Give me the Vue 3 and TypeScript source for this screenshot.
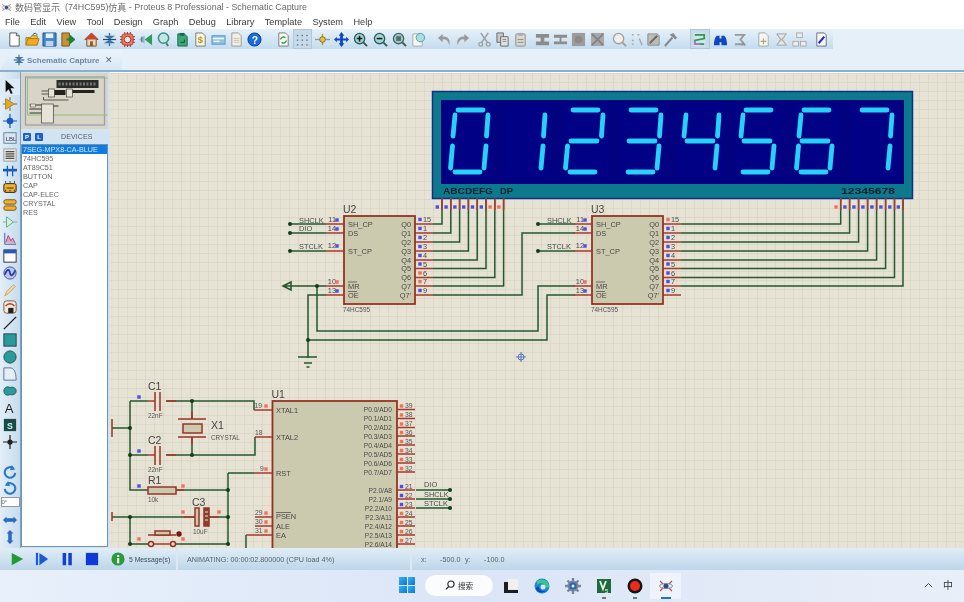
<template>
  <div class="app">
    <!-- title bar -->
    <div class="titlebar">
      <svg class="title-icon" viewBox="0 0 16 16" v-html="icons.atom"></svg>
      <span class="title-cjk">数码管显示</span>
      <span>&nbsp;&nbsp;(74HC595)</span>
      <span class="title-cjk">仿真</span>
      <span>&nbsp;- Proteus 8 Professional - Schematic Capture</span>
    </div>

    <!-- menu -->
    <div class="menubar">
      <span v-for="m in menus" :key="m">{{ m }}</span>
    </div>

    <!-- main toolbar -->
    <div class="toolbar-row">
      <div class="toolbar">
        <div
          v-for="(g, gi) in toolGroups"
          :key="gi"
          class="tool-group"
          :style="{ marginLeft: g.gap + 'px' }"
        >
          <div
            v-for="(name, i) in g.icons"
            :key="i"
            class="tb-btn"
            :class="{ 'tb-on': name === 'grid' || name === 'route' }"
            :style="{ width: g.w + 'px' }"
          >
            <svg viewBox="0 0 16 16" v-html="icons[name]"></svg>
          </div>
        </div>
      </div>
    </div>

    <!-- tabs -->
    <div class="tabbar">
      <div class="tab">
        <svg viewBox="0 0 16 16" v-html="icons.schem"></svg>
        <span class="tab-label">Schematic Capture</span>
        <span class="tab-close">✕</span>
      </div>
    </div>

    <div class="main">
      <!-- mode strip -->
      <div class="modes">
        <div
          v-for="(name, i) in modeTop"
          :key="i"
          class="mode"
          :class="{ 'mode-on': i === 0 }"
        >
          <svg viewBox="0 0 16 16" v-html="icons[name]"></svg>
        </div>
        <div class="mode-gap"></div>
        <div v-for="name in ['rotcw', 'rotccw']" :key="name" class="mode">
          <svg viewBox="0 0 16 16" v-html="icons[name]"></svg>
        </div>
        <div class="angle">0°</div>
        <div v-for="name in ['fliph', 'flipv']" :key="name" class="mode">
          <svg viewBox="0 0 16 16" v-html="icons[name]"></svg>
        </div>
      </div>

      <!-- overview + device list -->
      <div class="side">
        <div class="overview">
          <svg viewBox="0 0 86 56" class="overview-svg">
            <rect x="4" y="4" width="79" height="48" fill="none" stroke="#9a9ab4" stroke-width="1.2" />
            <path d="M6 5 H86 M6 5 V42 H86" fill="none" stroke="#8fbf86" stroke-width="1" />
            <rect x="35" y="7" width="42" height="8" fill="#2b2b2b" />
            <path d="M37 11 H75" stroke="#777" stroke-width="3" stroke-dasharray="2 1.5" />
            <rect x="27" y="16" width="6" height="8" fill="#e6e4d6" stroke="#444" stroke-width=".7" />
            <rect x="45" y="16" width="6" height="8" fill="#e6e4d6" stroke="#444" stroke-width=".7" />
            <path d="M33 17h11v5H33z M51 17h22v3H51z" fill="#222" />
            <path d="M20 18h7M20 21h7M22 24v3h25" stroke="#333" stroke-width=".8" fill="none" />
            <rect x="20" y="31" width="12" height="19" fill="#e6e4d6" stroke="#444" stroke-width=".7" />
            <path d="M8 32h12M8 36h12M8 40h12M32 33h5" stroke="#333" stroke-width="1" />
            <rect x="9" y="31" width="5" height="3" fill="#e6e4d6" stroke="#444" stroke-width=".5" />
          </svg>
        </div>
        <div class="dev-head">
          <span class="pl">P</span>
          <span class="pl">L</span>
          <span class="dev-title">DEVICES</span>
        </div>
        <div class="dev-list">
          <div
            v-for="(d, i) in devices"
            :key="d"
            class="dev"
            :class="{ 'dev-on': i === 0 }"
          >{{ d }}</div>
        </div>
      </div>

      <!-- schematic canvas -->
      <svg class="canvas" viewBox="110 73 854 475">
        <defs>
          <pattern id="minor" x="1" y="1" width="9" height="9" patternUnits="userSpaceOnUse">
            <path d="M9 0H0V9" fill="none" stroke="#d2cfbf" stroke-width="1" />
          </pattern>
        </defs>
        <rect x="110" y="73" width="854" height="475" fill="#e6e3d5" />
        <rect x="110" y="73" width="854" height="475" fill="url(#minor)" />

        <!-- 7 segment display -->
        <rect x="432.5" y="91.5" width="480" height="107" fill="#0c7a8c" stroke="#10308a" stroke-width="1.5" />
        <rect x="441" y="100" width="463" height="84" fill="#020280" />
        <rect v-for="o in digitOffsets" :key="o" :x="447 + o" y="104" width="46" height="74" fill="#010186" />
        <g v-for="(d, di) in digitSegs" :key="di">
          <line
            v-for="(s, si) in d"
            :key="si"
            :x1="s[0]" :y1="s[1]" :x2="s[2]" :y2="s[3]"
            stroke="#26d2fb"
            stroke-width="4.8"
            stroke-linecap="round"
          />
        </g>
        <text x="443" y="194" class="seg-label" textLength="50" lengthAdjust="spacingAndGlyphs">ABCDEFG</text>
        <text x="500" y="194" class="seg-label" textLength="13" lengthAdjust="spacingAndGlyphs">DP</text>
        <text x="841" y="194" class="seg-label" textLength="54" lengthAdjust="spacingAndGlyphs">12345678</text>

        <!-- net wires -->
        <path
          v-for="(w, i) in wires"
          :key="'w' + i"
          :d="w"
          fill="none"
          stroke="#24592e"
          stroke-width="1.5"
        />
        <!-- pin stubs -->
        <path :d="stubs" fill="none" stroke="#a8392a" stroke-width="1.5" />

        <!-- ICs -->
        <g v-for="c in chips" :key="c.name">
          <rect :x="c.x" :y="c.y" :width="c.w" :height="c.h" class="chip" />
          <text :x="c.x - 1" :y="c.y - 3.5" class="ref">{{ c.name }}</text>
          <text v-if="c.sub" :x="c.x - 1" :y="c.y + c.h + 8" class="sub">{{ c.sub }}</text>
        </g>
        <text
          v-for="(t, i) in texts"
          :key="'t' + i"
          :x="t.x"
          :y="t.y"
          :class="t.cls || 'pin'"
          :text-anchor="t.end ? 'end' : 'start'"
        >{{ t.s }}</text>
        <path d="M348 282h9M348 291.500h9M596 282h9M596 291.500h9M276 512.500h15" stroke="#444" stroke-width=".7" />

        <!-- capacitors, crystal, resistor, button -->
        <g class="part">
          <path d="M155 392v19M160 392v19M155 446v19M160 446v19M178 419h28M178 437h28M112 419v18M112 512v9" />
          <rect x="183" y="424" width="19" height="9" class="body" />
          <rect x="148" y="487" width="28" height="7" class="body" />
          <rect x="195" y="508" width="4" height="18" class="body" />
          <rect x="204" y="508" width="5" height="18" fill="#8a4030" />
          <path d="M205 512h3M205 516h3M205 520h3" stroke="#e6e3d5" stroke-width="1" />
          <path d="M148 535h28M162 535v-3" />
          <rect x="155" y="531" width="15" height="4" class="body" />
          <circle cx="151" cy="544" r="2.5" fill="#e6e3d5" />
          <circle cx="173" cy="544" r="2.5" fill="#e6e3d5" />
          <circle cx="179" cy="534" r="2.7" fill="#7a1414" stroke="none" />
        </g>

        <circle v-for="(p, i) in dots" :key="'d' + i" :cx="p[0]" :cy="p[1]" r="2" fill="#123d1b" />
        <path d="M291 286 L283 286 M291 282 L283 286 L291 290 Z" fill="none" stroke="#24592e" stroke-width="1.6" />
        <path d="M298 357h19M304 363h8M306.500 367h3" stroke="#24592e" stroke-width="1.4" />
        <rect
          v-for="(p, i) in squares"
          :key="'s' + i"
          :x="p[0] - 1.7"
          :y="p[1] - 1.7"
          width="3.4"
          height="3.4"
          :fill="p[2] ? '#f2705c' : '#4a4fe6'"
        />

        <!-- origin marker -->
        <g fill="none" stroke="#5a72c8" stroke-width="1">
          <circle cx="521" cy="357" r="3" />
          <path d="M516 357h10M521 352v10" />
        </g>
      </svg>
    </div>

    <!-- status bar -->
    <div class="statusbar">
      <div class="sim">
        <svg viewBox="0 0 16 16" v-html="icons.play"></svg>
        <svg viewBox="0 0 16 16" v-html="icons.step"></svg>
        <svg viewBox="0 0 16 16" v-html="icons.pause"></svg>
        <svg viewBox="0 0 16 16" v-html="icons.stop"></svg>
      </div>
      <div class="msg">
        <svg viewBox="0 0 16 16" v-html="icons.info"></svg>
        <span>5 Message(s)</span>
      </div>
      <div class="anim">ANIMATING: 00:00:02.800000 (CPU load 4%)</div>
      <div class="coords">
        <span class="cx">x:</span>
        <span class="cv">-500.0</span>
        <span class="cy">y:</span>
        <span class="cv2">-100.0</span>
      </div>
    </div>

    <!-- windows taskbar -->
    <div class="taskbar">
      <div class="win-logo">
        <i></i><i></i><i></i><i></i>
      </div>
      <div class="search">
        <svg viewBox="0 0 16 16" width="10" height="10">
          <circle cx="9.500" cy="6.500" r="5" fill="none" stroke="#222" stroke-width="1.800" />
          <path d="M6 10.500 1.500 15" stroke="#222" stroke-width="2" />
        </svg>
        <span>搜索</span>
      </div>
      <div class="apps">
        <div v-for="a in taskApps" :key="a.name" class="app-icon" :class="{ active: a.active, running: a.running }">
          <svg viewBox="0 0 16 16" v-html="icons[a.name]"></svg>
        </div>
      </div>
      <div class="tray">
        <svg viewBox="0 0 12 8" width="9" height="6">
          <path d="M1 7l5-5 5 5" fill="none" stroke="#444" stroke-width="1.300" />
        </svg>
        <span>中</span>
      </div>
    </div>
  </div>
</template>

<script setup lang="ts">
type Seg = [number, number, number, number]

const menus = ['File', 'Edit', 'View', 'Tool', 'Design', 'Graph', 'Debug', 'Library', 'Template', 'System', 'Help']
const devices = ['7SEG-MPX8-CA-BLUE', '74HC595', 'AT89C51', 'BUTTON', 'CAP', 'CAP-ELEC', 'CRYSTAL', 'RES']

const icons: Record<string, string> = {
  atom: `<circle cx="8" cy="8" r="2.600" fill="#2a4a8c"/><g fill="none" stroke="#c4473a" stroke-width="1.100"><path d="M2 3l3 3M14 3l-3 3M2 13l3-3M14 13l-3-3"/></g><g fill="none" stroke="#7a8aa0"><ellipse cx="8" cy="8" rx="6.500" ry="2.500"/></g>`,
  new: `<path d="M3 1h7l3 3v11H3z" fill="#fff" stroke="#555"/><path d="M10 1v3h3" fill="#ddd" stroke="#555"/>`,
  open: `<path d="M1 14V6h5l1-2h6v3" fill="#f2c24a" stroke="#a87a1a"/><path d="M1 14l2-7h12l-2 7z" fill="#f6a81e" stroke="#a87a1a"/><path d="M8 3l3-2 2 2" fill="none" stroke="#444"/>`,
  save: `<path d="M1 1h14v14H1z" fill="#3f86cf" stroke="#24588f"/><rect x="4" y="1.500" width="8" height="5" fill="#e8f0f8"/><rect x="4" y="9.500" width="8" height="5.500" fill="#c0d4e8"/>`,
  imp: `<path d="M2 1h8v14H2z" fill="#c8923a" stroke="#7a5516"/><path d="M7 8l8 0M11 4.500v7l4-3.500z" fill="#34a84a" stroke="#1f8236" stroke-width="2"/>`,
  home: `<path d="M8 1L1 8h2v7h10V8h2z" fill="#e8d8b8" stroke="#7a4a1a"/><path d="M8 1L1 8h14z" fill="#d0442a"/><rect x="6.500" y="10" width="3" height="5" fill="#8a5a2a"/>`,
  schem: `<path d="M8 1v3M8 12v3" stroke="#4a6a8a" stroke-width="1.500"/><path d="M2 4h12L8 8z M2 12h12L8 8z" fill="#3a74b0"/><path d="M1 8h14" stroke="#2a4a6a" stroke-width="1.300"/>`,
  pcb: `<rect x="2" y="2" width="12" height="12" rx="3" fill="#e47a6a" stroke="#b33a2a"/><circle cx="8" cy="8" r="3.500" fill="#f6e8e0" stroke="#a82a1a"/><path d="M5 0v2M8 0v2M11 0v2M5 14v2M8 14v2M11 14v2M0 5h2M0 8h2M0 11h2M14 5h2M14 8h2M14 11h2" stroke="#a82a1a"/>`,
  view3d: `<path d="M15 2v12L7 8z" fill="#2f9a5a"/><path d="M7 3.500v9L1 8z" fill="#9ab4c8"/><path d="M4 5v6" stroke="#4a6a8a"/>`,
  gallery: `<circle cx="8" cy="6.500" r="5.500" fill="#bfe8e4" stroke="#3a8a8a" stroke-width="1.600"/><path d="M11 12l2 3" stroke="#4a7a4a" stroke-width="2"/>`,
  bom: `<path d="M3 2h7l3 3v10H3z" fill="#3aa878" stroke="#1a6a4a"/><path d="M5 1h5v3H5z" fill="#1a6a4a"/><path d="M6 11h4v-3" fill="none" stroke="#124a2a"/>`,
  money: `<path d="M3 1h7l3 3v11H3z" fill="#fbf6e0" stroke="#777"/><text x="5" y="12" font-size="10" font-weight="700" fill="#b8901a" font-family="Liberation Sans">$</text>`,
  card: `<rect x="1" y="4" width="14" height="9" fill="#8cc4ee" stroke="#5a92c0"/><path d="M2 7h12M3 10h6" stroke="#fff" stroke-width="1.500"/>`,
  page: `<path d="M3 1h7l3 3v11H3z" fill="#f2efe6" stroke="#9a9a94"/><path d="M5 7h6M5 9h6M5 11h6" stroke="#c8c4b8"/>`,
  help: `<circle cx="8" cy="8" r="7" fill="#1a6ae0" stroke="#0a3a8a"/><text x="5" y="12.500" font-size="11" font-weight="700" fill="#fff" font-family="Liberation Sans">?</text>`,
  refresh: `<path d="M3 1h7l3 3v11H3z" fill="#f8f8f4" stroke="#777"/><path d="M5 8a3 3 0 0 1 5-2M11 9a3 3 0 0 1-5 2" fill="none" stroke="#2a9a3a" stroke-width="1.500"/>`,
  grid: `<g fill="#5a7a98"><rect x="2" y="3" width="1.500" height="1.500"/><rect x="7" y="3" width="1.500" height="1.500"/><rect x="12" y="3" width="1.500" height="1.500"/><rect x="2" y="8" width="1.500" height="1.500"/><rect x="7" y="8" width="1.500" height="1.500"/><rect x="12" y="8" width="1.500" height="1.500"/><rect x="2" y="13" width="1.500" height="1.500"/><rect x="7" y="13" width="1.500" height="1.500"/><rect x="12" y="13" width="1.500" height="1.500"/></g>`,
  origin: `<path d="M0 8h16" stroke="#8a9ab0" stroke-width="1.500"/><path d="M8 2v12" stroke="#b09a3a" stroke-width="1.500"/><circle cx="8" cy="8" r="3" fill="#e8c23a" stroke="#8a6a1a"/>`,
  move: `<path d="M8 0l3 4H9.500v3H13V5l3 3-3 3V9H9.500v3H11l-3 4-3-4h1.500V9H3v2L0 8l3-3v2h3.500V4H5z" fill="#0e47c4"/>`,
  zoomin: `<circle cx="7" cy="7" r="5.500" fill="#9fd6d0" stroke="#2a5a6a" stroke-width="1.400"/><path d="M4 7h6M7 4v6" stroke="#111" stroke-width="1.600"/><path d="M11 11l4 4" stroke="#3a5a4a" stroke-width="2"/>`,
  zoomout: `<circle cx="7" cy="7" r="5.500" fill="#9fd6d0" stroke="#2a5a6a" stroke-width="1.400"/><path d="M4 7h6" stroke="#111" stroke-width="1.600"/><path d="M11 11l4 4" stroke="#3a5a4a" stroke-width="2"/>`,
  zoomfit: `<circle cx="7" cy="7" r="5.500" fill="#9fc8c0" stroke="#3a6a70" stroke-width="1.400"/><rect x="4.500" y="4.500" width="5" height="5" fill="#5a6a6a"/><path d="M11 11l4 4" stroke="#3a5a4a" stroke-width="2"/>`,
  zoomarea: `<path d="M2 2h10v13H2z" fill="#f6f6f2" stroke="#aaa"/><circle cx="10" cy="6" r="4.500" fill="#a8e0e0" stroke="#5a9aa0"/>`,
  undo: `<path d="M13 14C15 8 11 4 6 5V2L1 6.500 6 11V8c3-1 6 1 7 6z" fill="#9a9a9a"/>`,
  redo: `<path d="M3 14C1 8 5 4 10 5V2l5 4.500L10 11V8c-3-1-6 1-7 6z" fill="#9a9a9a"/>`,
  cut: `<path d="M4 1l7 10M12 1L5 11" stroke="#a0a0a0" stroke-width="1.600"/><circle cx="4" cy="13" r="2" fill="none" stroke="#a0a0a0" stroke-width="1.400"/><circle cx="12" cy="13" r="2" fill="none" stroke="#a0a0a0" stroke-width="1.400"/>`,
  copy: `<path d="M2 1h7v10H2z" fill="#c8c8c8" stroke="#6a6a6a"/><path d="M6 5h8v10H6z" fill="#e2e2dc" stroke="#6a6a6a"/><path d="M8 8h4M8 10h4" stroke="#888"/>`,
  paste: `<rect x="3" y="2" width="10" height="13" rx="1" fill="#d8d8d0" stroke="#8a8a8a"/><rect x="5.500" y="1" width="5" height="3" fill="#aaa"/><path d="M5 8h6M5 11h6" stroke="#888"/>`,
  blk1: `<path d="M1 2h14v4H10v4h5v4H1v-4h5V6H1z" fill="#8c8c8c"/>`,
  blk2: `<path d="M1 3h14v3H1zM7 6h2v4h6v3H1v-3h6z" fill="#8c8c8c"/>`,
  blk3: `<rect x="1" y="1" width="14" height="14" fill="#9c9c9c"/><circle cx="8" cy="8" r="4" fill="#8a8a8a"/>`,
  blk4: `<rect x="1" y="1" width="14" height="14" fill="#a8a8a8"/><path d="M2 2l12 12M14 2L2 14" stroke="#828282" stroke-width="2"/>`,
  pick: `<circle cx="7" cy="7" r="5.500" fill="#f0eeea" stroke="#a0a0a0" stroke-width="1.400"/><path d="M11 11l4 4" stroke="#a0a0a0" stroke-width="2"/>`,
  probe: `<path d="M3 3h2M9 3h2M3 9h2M3 13h2M11 7l3 7" stroke="#a8a8a8" stroke-width="1.500"/>`,
  packed: `<path d="M2 2h10l2 2v10H2z" fill="#bdbdb8" stroke="#8a8a8a"/><path d="M4 12L12 4" stroke="#6a6a6a" stroke-width="2"/>`,
  hammer: `<path d="M2 15l8-9" stroke="#8a8a8a" stroke-width="2.400"/><path d="M7 3l4-2 4 5-2 2-2-2z" fill="#8a8a8a"/>`,
  route: `<rect x="2" y="1" width="12" height="14" fill="#d4e4ee"/><path d="M3 3h10v4L3 9v4h10" fill="none" stroke="#2a9a4a" stroke-width="1.800"/><path d="M3 9v4h6" fill="none" stroke="#b07ac8" stroke-width="1.500"/>`,
  binoc: `<path d="M1 14c0-5 1-8 3-10h3v3h2V4h3c2 2 3 5 3 10H9v-3H7v3z" fill="#0e47c4"/>`,
  annot: `<path d="M2 3h10L8 8l4 5H2" fill="none" stroke="#9a9a9a" stroke-width="2"/><text x="9" y="15" font-size="6" fill="#8a8a8a" font-family="Liberation Sans">A</text>`,
  sheet: `<path d="M3 1h7l3 3v11H3z" fill="#f6f6f2" stroke="#a8a8a8"/><path d="M8 7v6M5 10h6" stroke="#a8a878" stroke-width="1.300"/>`,
  sheetx: `<path d="M3 2h10L9 8l4 6H3l4-6z" fill="#e8e8e2" stroke="#a0a0a0"/><path d="M3 2l10 12M13 2L3 14" stroke="#b0b0b0"/>`,
  tree: `<rect x="5" y="1" width="6" height="5" fill="#eee" stroke="#a8a8a8"/><rect x="1" y="10" width="6" height="5" fill="#eee" stroke="#a8a8a8"/><rect x="9" y="10" width="6" height="5" fill="#eee" stroke="#a8a8a8"/>`,
  edit: `<path d="M3 1h8l2 2v12H3z" fill="#fafafa" stroke="#6a6a7a"/><path d="M5 12L11 5" stroke="#1f2ac8" stroke-width="2.200"/>`,
  arrow: `<path d="M3 0v14l3.500-3.500L9 16l2-1-2.500-5.500H13z" fill="#111"/>`,
  comp: `<path d="M0 8h3M13 8h3M8 0v4M8 12v4" stroke="#7a6a2a" stroke-width="1.200"/><path d="M3 2l10 6-10 6z" fill="#e8a828" stroke="#a87a1a"/>`,
  junction: `<path d="M0 8h16M8 0v16" stroke="#1a5ac0" stroke-width="1.400"/><circle cx="8" cy="8" r="3.800" fill="#1a5ac0"/>`,
  label: `<rect x="1" y="2" width="14" height="12" fill="#d8e6f2" stroke="#5a7a98"/><text x="3" y="11" font-size="7" fill="#335" font-family="Liberation Sans">LBL</text>`,
  script: `<rect x="1" y="1" width="14" height="14" fill="#e8e8e0" stroke="#999"/><path d="M3 4h10M3 6h10M3 8h10M3 10h10M3 12h10" stroke="#333"/>`,
  buses: `<path d="M0 7h16" stroke="#1a5ab8" stroke-width="3"/><path d="M5 2v12M11 2v12" stroke="#1a5ab8" stroke-width="1.500"/>`,
  subckt: `<rect x="1" y="3" width="14" height="10" rx="2" fill="#f2b030" stroke="#111"/><path d="M3 0v16M8 0v16M13 0v16" stroke="#222" stroke-dasharray="2 8"/><path d="M4 8h8" stroke="#222"/>`,
  term: `<rect x="1" y="2" width="14" height="5" rx="2" fill="#f2b030" stroke="#6a4a0a"/><rect x="1" y="9" width="14" height="5" rx="2" fill="#f2b030" stroke="#6a4a0a"/>`,
  port: `<path d="M0 8h4M12 8h4" stroke="#7aa88a"/><path d="M4 2l8 6-8 6z" fill="#d0f0d8" stroke="#5aa878"/>`,
  chart: `<path d="M2 1v13h13" fill="none" stroke="#3a4ab8"/><path d="M3 12L6 4l3 6 2-3 3 6" fill="#e0a8b8" stroke="#a03a7a"/>`,
  tape: `<rect x="1" y="1" width="14" height="14" fill="#fff" stroke="#223"/><rect x="1" y="1" width="14" height="4" fill="#2a58b8"/>`,
  gen: `<circle cx="8" cy="8" r="7" fill="#b8c8e8" stroke="#3a48a8"/><path d="M2 10c3-7 5-7 6-2s4 2 6-3" fill="none" stroke="#2a38a8" stroke-width="2"/>`,
  probe2: `<path d="M2 15l2-5 8-8 2 2-8 8z" fill="#f4d8a8" stroke="#c89a4a"/>`,
  meter: `<rect x="1" y="1" width="14" height="14" rx="3" fill="#f2ece0" stroke="#7a4a3a"/><path d="M3 7a6 6 0 0 1 10 0" fill="none" stroke="#c03a2a" stroke-width="1.500"/><rect x="6" y="9" width="6" height="6" fill="#222"/>`,
  line: `<path d="M1 15L15 1" stroke="#222" stroke-width="1.600"/>`,
  box: `<rect x="1" y="1" width="14" height="14" fill="#2a9a9a" stroke="#1a3a3a"/>`,
  circle: `<circle cx="8" cy="8" r="7" fill="#2a9a9a" stroke="#1a4a4a"/>`,
  arc: `<path d="M1 1h7c4 0 7 4 7 14H1z" fill="#e4eef6" stroke="#4a6a8a"/>`,
  blob: `<path d="M1 8c0-4 4-6 7-4 3-1 7 0 7 4s-4 5-7 4c-3 2-7 0-7-4z" fill="#2a9a9a" stroke="#1a5a5a"/>`,
  textA: `<text x="2" y="14" font-size="15" fill="#222" font-family="Liberation Sans">A</text>`,
  sym: `<rect x="1" y="1" width="14" height="14" fill="#1a4a4a"/><text x="4.500" y="12" font-size="10" font-weight="700" fill="#cfe" font-family="Liberation Sans">S</text>`,
  cross: `<path d="M0 8h16M8 0v16" stroke="#222" stroke-width="1.400"/><circle cx="8" cy="8" r="3" fill="#222"/>`,
  rotcw: `<path d="M14 9a6 6 0 1 1-2-5" fill="none" stroke="#2a7ac8" stroke-width="2.400"/><path d="M10 0l4 5-6 1z" fill="#2a7ac8"/>`,
  rotccw: `<path d="M2 9a6 6 0 1 0 2-5" fill="none" stroke="#2a7ac8" stroke-width="2.400"/><path d="M6 0L2 5l6 1z" fill="#2a7ac8"/>`,
  fliph: `<path d="M0 8l4-4v2h8V4l4 4-4 4v-2H4v2z" fill="#2a6ac0"/>`,
  flipv: `<path d="M8 0l4 4h-2v8h2l-4 4-4-4h2V4H4z" fill="#2a6ac0"/>`,
  play: `<path d="M2 1l13 7-13 7z" fill="#1f9a36"/>`,
  step: `<path d="M1 1h2.500v14H1z" fill="#1a5ad8"/><path d="M5 1l10 7-10 7z" fill="#1a5ad8"/>`,
  pause: `<path d="M3 1h4v14H3zM9.500 1h4v14h-4z" fill="#1440d0"/>`,
  stop: `<rect x="1" y="1" width="14" height="14" fill="#1038d8"/>`,
  info: `<circle cx="8" cy="8" r="7.500" fill="#2a9a3a"/><rect x="7" y="7" width="2.400" height="6" fill="#fff"/><rect x="7" y="3.500" width="2.400" height="2.200" fill="#fff"/>`,
  task1: `<rect x="5" y="1" width="10" height="10" fill="#f0f0ec"/><path d="M1 4h4v8h10v3H1z" fill="#1e1e1e"/>`,
  edge: `<circle cx="8" cy="8" r="7.500" fill="#1a8ad8"/><path d="M3 3a7.500 7.500 0 0 1 12 5c0 2-4 2-4 0 0-3-6-4-8-1z" fill="#3ac88a"/><path d="M5 9c0 4 5 5 8 3-2 3-9 4-11-1 0-2 2-3 3-2z" fill="#0a4ab0"/><circle cx="9" cy="9" r="2.500" fill="#d8e8f6"/>`,
  gear: `<circle cx="8" cy="8" r="5.500" fill="#7a8698"/><path d="M8 0v16M0 8h16M2.500 2.500l11 11M13.500 2.500l-11 11" stroke="#7a8698" stroke-width="2.400"/><circle cx="8" cy="8" r="3.600" fill="#2a62c0"/><circle cx="8" cy="8" r="1.500" fill="#cfe"/>`,
  keil: `<rect x="1" y="1" width="14" height="14" fill="#1f6a3a"/><path d="M4 3l3 8 3-8" fill="none" stroke="#e8f8e8" stroke-width="1.800"/><text x="9" y="15" font-size="6" fill="#fff" font-family="Liberation Sans">5</text>`,
  record: `<circle cx="8" cy="8" r="7.500" fill="#151515"/><circle cx="8" cy="8" r="5" fill="#ee2a1a"/>`,
}

const toolGroups = [
  { gap: 6, w: 17.5, icons: ['new', 'open', 'save', 'imp'] },
  { gap: 6, w: 18.2, icons: ['home', 'schem', 'pcb', 'view3d', 'gallery', 'bom', 'money', 'card', 'page', 'help'] },
  { gap: 10, w: 19.3, icons: ['refresh', 'grid', 'origin', 'move', 'zoomin', 'zoomout', 'zoomfit', 'zoomarea'] },
  { gap: 7, w: 18, icons: ['undo', 'redo'] },
  { gap: 4, w: 18, icons: ['cut', 'copy', 'paste'] },
  { gap: 4, w: 18.3, icons: ['blk1', 'blk2', 'blk3', 'blk4'] },
  { gap: 4, w: 17.3, icons: ['pick', 'probe', 'packed', 'hammer'] },
  { gap: 10, w: 20.5, icons: ['route', 'binoc', 'annot'] },
  { gap: 3, w: 18, icons: ['sheet', 'sheetx', 'tree'] },
  { gap: 4, w: 18, icons: ['edit'] },
]

const modeTop = [
  'arrow', 'comp', 'junction', 'label', 'script', 'buses', 'subckt', 'term', 'port', 'chart',
  'tape', 'gen', 'probe2', 'meter', 'line', 'box', 'circle', 'arc', 'blob', 'textA', 'sym', 'cross',
]

const taskApps = [
  { name: 'task1' },
  { name: 'edge' },
  { name: 'gear' },
  { name: 'keil', running: true },
  { name: 'record', running: true },
  { name: 'atom', active: true },
]

// 七段数码管：每一段的端点，相对第一位的位置
const digitOffsets = [0, 57, 115, 173, 231, 288, 346, 404]
const shown = ['abcdef', 'bc', 'abged', 'abgcd', 'fgbc', 'afgcd', 'afgedc', 'abc']
const segMap: Record<string, Seg> = {
  a: [458, 110, 483, 110],
  b: [488, 115, 486.5, 136],
  c: [486, 146, 484, 168],
  d: [455, 172, 480, 172],
  e: [452.5, 146, 450.5, 168],
  f: [455, 115, 453, 136],
  g: [456, 141, 482, 141],
}
const digitSegs: Seg[][] = shown.map((s, i) =>
  s.split('').map((k) => {
    const p = segMap[k]
    const o = digitOffsets[i]
    return [p[0] + o, p[1], p[2] + o, p[3]] as Seg
  }),
)

const rows = [224, 233, 242, 251, 260, 268.5, 277.5, 286, 295]
const p0 = [409.5, 418.5, 427.5, 436, 445, 454, 463, 472]
const p2 = [490, 499, 508, 517, 526, 535, 544]
const dispA = [442, 450.8, 459.6, 468.4, 477.2, 486, 494.8, 503.6]
const dispB = [840.7, 849.6, 858.6, 867.6, 876.6, 885.6, 894.5, 903]

const wires: string[] = [
  ...dispA.map((x, i) => `M433 ${rows[i]}H${x}V198`),
  `M433 295H522V233H575`,
  `M290 224H326M290 233H326M290 251H326`,
  `M291 286H326M317 286V331H538V286H575`,
  `M326 295H308V358M308 340H547V295H575`,
  `M538 224H575M538 251H575`,
  ...dispB.map((x, i) => `M681 ${rows[i]}H${x}V198`),
  // U1 周围
  `M130 401H148M166 401H254V410`,
  `M192 401V419M192 437V455`,
  `M112 428H130M130 401V490H148M176 490H228`,
  `M130 455H148M166 455H255V437`,
  `M228 473V544M228 473H254`,
  `M112 517H195M209 517H228M130 517V544H148M176 544H228`,
  `M246 535V548`,
  `M416 490H450M416 499H450M416 508H450`,
]

const stubPins = [
  ...rows.map((y) => `M415 ${y}H433`),
  ...rows.map((y) => `M663 ${y}H681`),
  `M326 224H344M326 233H344M326 251H344M326 286H344M326 295H344`,
  `M574 224H592M574 233H592M574 251H592M574 286H592M574 295H592`,
  ...dispA.map((x) => `M${x} 198V210`),
  ...dispB.map((x) => `M${x} 198V210`),
  `M254 410H272M255 437H272M254 473H272M255 517H272M255 526H272M246 535H272`,
  ...p0.map((y) => `M397 ${y}H415`),
  ...p2.map((y) => `M397 ${y}H415`),
  `M166 401H176M166 455H176M148 401H155M148 455H155M176 490H184M192 412V419M192 437V444`,
  `M184 517H195M209 517H219M148 544H176`,
]
const stubs = stubPins.join('')

const chips = [
  { name: 'U2', sub: '74HC595', x: 344, y: 216, w: 71, h: 88 },
  { name: 'U3', sub: '74HC595', x: 592, y: 216, w: 71, h: 88 },
  { name: 'U1', sub: '', x: 272.5, y: 401, w: 124.5, h: 170 },
]

const dots: number[][] = [
  [290, 224], [290, 233], [290, 251], [317, 286], [308, 340],
  [538, 224], [538, 251],
  [192, 401], [192, 455], [130, 428], [130, 455], [130, 517], [130, 544],
  [228, 490], [228, 517], [228, 544],
  [450, 490], [450, 499], [450, 508],
]

const squares: number[][] = []
dispA.forEach((x, i) => squares.push([x - 4.7, 207, i > 5 ? 1 : 0]))
dispB.forEach((x, i) => squares.push([x - 4.7, 207, i === 0 ? 1 : 0]))
rows.forEach((y, i) => {
  squares.push([420, y - 4.5, i === 6 || i === 7 ? 1 : 0])
  squares.push([668, y - 4.5, i === 0 ? 1 : 0])
})
squares.push([337, 220, 0], [337, 229, 0], [337, 246, 0], [337, 282, 1], [337, 291, 0])
squares.push([585, 220, 0], [585, 229, 0], [585, 246, 0], [585, 282, 1], [585, 291, 0])
squares.push([139, 397, 0], [139, 451, 0], [139, 486, 0], [183, 486, 1], [183, 512, 1], [219, 512, 1], [139, 539, 1], [183, 539, 1])
p0.forEach((y) => squares.push([401.5, y - 3.5, 1]))
p2.forEach((y, i) => squares.push([401.5, y - 3.5, i > 2 ? 1 : 0]))
squares.push([266, 406, 1], [266, 469, 1], [266, 513, 1], [266, 522, 1], [266, 531, 1])

type T = { x: number; y: number; s: string; end?: boolean; cls?: string }
const texts: T[] = []
const qNames = ['Q0', 'Q1', 'Q2', 'Q3', 'Q4', 'Q5', 'Q6', 'Q7', "Q7'"]
const qNums = ['15', '1', '2', '3', '4', '5', '6', '7', '9']
for (const cx of [344, 592]) {
  rows.forEach((y, i) => {
    texts.push({ x: cx + 67, y: y + 2.500, s: qNames[i], end: true })
    texts.push({ x: cx + 79, y: y - 2, s: qNums[i] })
  })
  texts.push(
    { x: cx + 4, y: 226.5, s: 'SH_CP' },
    { x: cx + 4, y: 235.5, s: 'DS' },
    { x: cx + 4, y: 253.5, s: 'ST_CP' },
    { x: cx + 4, y: 288.5, s: 'MR' },
    { x: cx + 4, y: 297.5, s: 'OE' },
    { x: cx - 8, y: 222, s: '11', end: true },
    { x: cx - 8, y: 231, s: '14', end: true },
    { x: cx - 8, y: 248, s: '12', end: true },
    { x: cx - 8, y: 284, s: '10', end: true },
    { x: cx - 8, y: 293, s: '13', end: true },
  )
}
texts.push(
  { x: 299, y: 222.500, s: 'SHCLK' },
  { x: 299, y: 231, s: 'DIO' },
  { x: 299, y: 249, s: 'STCLK' },
  { x: 547, y: 222.500, s: 'SHCLK' },
  { x: 547, y: 249, s: 'STCLK' },
  { x: 148, y: 390, s: 'C1', cls: 'ref' },
  { x: 148, y: 444, s: 'C2', cls: 'ref' },
  { x: 148, y: 484, s: 'R1', cls: 'ref' },
  { x: 192, y: 506, s: 'C3', cls: 'ref' },
  { x: 211, y: 429, s: 'X1', cls: 'ref' },
  { x: 211, y: 439.500, s: 'CRYSTAL', cls: 'sub' },
  { x: 148, y: 417.500, s: '22nF', cls: 'sub' },
  { x: 148, y: 471.500, s: '22nF', cls: 'sub' },
  { x: 148, y: 502, s: '10k', cls: 'sub' },
  { x: 193, y: 534, s: '10uF', cls: 'sub' },
  { x: 276, y: 412.500, s: 'XTAL1' },
  { x: 276, y: 439.500, s: 'XTAL2' },
  { x: 276, y: 475.500, s: 'RST' },
  { x: 276, y: 519, s: 'PSEN' },
  { x: 276, y: 528.500, s: 'ALE' },
  { x: 276, y: 537.500, s: 'EA' },
  { x: 254.500, y: 408, s: '19', cls: 'num' },
  { x: 255, y: 435, s: '18', cls: 'num' },
  { x: 260, y: 471, s: '9', cls: 'num' },
  { x: 255, y: 515, s: '29', cls: 'num' },
  { x: 255, y: 524, s: '30', cls: 'num' },
  { x: 255, y: 533, s: '31', cls: 'num' },
  { x: 424, y: 487, s: 'DIO' },
  { x: 424, y: 496.500, s: 'SHCLK' },
  { x: 424, y: 505.500, s: 'STCLK' },
)
p0.forEach((y, i) => {
  texts.push({ x: 392, y: y + 2.500, s: `P0.${i}/AD${i}`, end: true, cls: 'pin7' })
  texts.push({ x: 405, y: y - 1.5, s: String(39 - i), cls: 'num' })
})
p2.forEach((y, i) => {
  texts.push({ x: 392, y: y + 2.500, s: `P2.${i}/A${8 + i}`, end: true, cls: 'pin7' })
  texts.push({ x: 405, y: y - 1.5, s: String(21 + i), cls: 'num' })
})
</script>

<style>
html, body {
  margin: 0;
  background: #e4eef8;
}
</style>

<style scoped>
.app {
  width: 964px;
  height: 602px;
  overflow: hidden;
  display: flex;
  flex-direction: column;
  font-family: "Liberation Sans", "Noto Sans CJK SC", sans-serif;
  background: #fff;
  filter: blur(0.45px);
}

.titlebar {
  height: 14px;
  display: flex;
  align-items: center;
  padding-left: 1px;
  font-size: 8.9px;
  color: #6a6a6a;
  background: #fff;
  white-space: pre;
}
.title-icon { width: 11px; height: 11px; margin-right: 3px; }
.title-cjk { font-family: "Noto Sans CJK TC", "Noto Sans CJK SC", sans-serif; font-size: 9px; }

.menubar {
  height: 15px;
  display: flex;
  align-items: center;
  gap: 10.4px;
  padding-left: 5px;
  font-size: 9.2px;
  color: #3a3a3a;
  background: #fff;
}

.toolbar-row { height: 20px; background: #e5f0f9; }
.toolbar {
  width: 833px;
  height: 20px;
  display: flex;
  background: linear-gradient(#e6f1fa, #c4dcee);
}
.tool-group { display: flex; }
.tb-btn {
  height: 20px;
  display: flex;
  align-items: center;
  justify-content: center;
}
.tb-btn svg { width: 15px; height: 15px; }
.tb-on { background: #c8dae8; box-shadow: inset 0 0 0 1px #aec8dc; }

.tabbar {
  height: 23px;
  background: #e5f0f9;
  box-sizing: border-box;
  border-bottom: 2px solid #89b0d0;
  display: flex;
  align-items: flex-end;
}
.tab {
  width: 122px;
  height: 20px;
  box-sizing: border-box;
  background: linear-gradient(#eaf3fb, #d9e8f4);
  clip-path: polygon(0 100%, 12px 0, 100% 0, 100% 100%);
  display: flex;
  align-items: center;
  padding-left: 13px;
  font-size: 8px;
}
.tab svg { width: 12px; height: 12px; margin-right: 2px; }
.tab-label { font-weight: 700; color: #6a8aa4; }
.tab-close { margin-left: 6px; color: #5a6a78; font-size: 9px; }

.main { height: 476px; display: flex; overflow: hidden; }

.modes {
  width: 21px;
  box-sizing: border-box;
  padding-top: 6.5px;
  background: linear-gradient(90deg, #e2eef8, #c6dcee);
  border-right: 1px solid #7ba2c2;
  display: flex;
  flex-direction: column;
  align-items: center;
}
.mode {
  width: 100%;
  height: 16.9px;
  flex: none;
  display: flex;
  align-items: center;
  justify-content: center;
}
.mode svg { width: 14px; height: 14px; }
.mode-on { background: #dcebf6; }
.mode-gap { height: 13px; flex: none; }
.angle {
  width: 19px;
  height: 10px;
  flex: none;
  margin-bottom: 4.5px;
  box-sizing: border-box;
  background: #fff;
  border: 1px solid #9a9a9a;
  font-size: 6px;
  line-height: 8px;
  color: #666;
}

.side {
  width: 89px;
  flex: none;
  box-sizing: border-box;
  padding: 1px 2px 1px 0;
  background: #d2e4f2;
  display: flex;
  flex-direction: column;
}
.overview { height: 56px; background: #d8d5c6; }
.overview-svg { width: 100%; height: 100%; display: block; }
.dev-head {
  height: 15px;
  display: flex;
  align-items: center;
  gap: 4px;
  padding-left: 2px;
  font-size: 7px;
}
.pl {
  width: 8px;
  height: 8px;
  background: #1c5ed0;
  color: #fff;
  font-size: 6px;
  font-weight: 700;
  line-height: 8px;
  text-align: center;
  border-radius: 1px;
}
.dev-title { margin-left: 14px; color: #56606a; letter-spacing: .1px; }
.dev-list {
  flex: 1;
  background: #fff;
  border: 1px solid #6f93ad;
  font-size: 7.2px;
  color: #666;
}
.dev { height: 9px; line-height: 9px; padding-left: 1px; }
.dev-on { background: #0f7ce0; color: #cfe6fb; }

.canvas { flex: 1; min-width: 0; height: 475px; margin-top: 1px; display: block; }
.chip { fill: #cbc9ae; stroke: #963424; stroke-width: 1.800; }
.ref { font-size: 10.5px; fill: #444; }
.sub { font-size: 6.4px; fill: #555; }
.pin { font-size: 7.4px; fill: #4a4a4a; }
.pin7 { font-size: 6.6px; fill: #4a4a4a; }
.num { font-size: 6.8px; fill: #555; }
.seg-label { font-size: 8.6px; font-weight: 700; fill: #06202e; }
.part { fill: none; stroke: #963424; stroke-width: 1.500; }
.part .body { fill: #cbc9ae; }

.statusbar {
  height: 22px;
  display: flex;
  align-items: center;
  background: linear-gradient(#e0edf7, #bdd6ea);
  font-size: 7.2px;
  color: #566;
}
.sim {
  width: 106px;
  flex: none;
  display: flex;
  gap: 11px;
  padding-left: 10px;
  box-sizing: border-box;
}
.sim svg { width: 14px; height: 14px; flex: none; }
.msg {
  width: 72px;
  height: 100%;
  flex: none;
  display: flex;
  align-items: center;
  gap: 4px;
  padding-left: 5px;
  box-sizing: border-box;
  border-right: 2px solid #dbe8f3;
  color: #3c4c5a;
  font-size: 6.8px;
}
.msg svg { width: 14px; height: 14px; }
.anim {
  width: 234px;
  height: 100%;
  flex: none;
  display: flex;
  align-items: center;
  padding-left: 9px;
  box-sizing: border-box;
  border-right: 2px solid #dbe8f3;
}
.coords { display: flex; align-items: center; }
.cx { margin-left: 9px; width: 19px; }
.cv { width: 25px; }
.cy { width: 19px; }

.taskbar {
  height: 32px;
  flex: none;
  display: flex;
  align-items: center;
  background: linear-gradient(90deg, #e8f0fb, #dbe5f7 50%, #e9eff9);
  padding-left: 399px;
  box-sizing: border-box;
  position: relative;
}
.win-logo {
  width: 16px;
  height: 16px;
  display: grid;
  grid-template-columns: 1fr 1fr;
  gap: 1px;
  margin-top: -2px;
}
.win-logo i { background: linear-gradient(135deg, #3ab4f2, #0a74d8); }
.search {
  width: 68px;
  height: 21px;
  margin-left: 10px;
  margin-top: -2px;
  box-sizing: border-box;
  background: #fbfcfe;
  border-radius: 11px;
  display: flex;
  align-items: center;
  justify-content: center;
  gap: 3px;
  font-size: 7.6px;
  color: #333;
  font-family: "Noto Sans CJK SC", sans-serif;
}
.apps { display: flex; margin-left: 2px; }
.app-icon {
  width: 31px;
  height: 26px;
  display: flex;
  align-items: center;
  justify-content: center;
  position: relative;
}
.app-icon svg { width: 16px; height: 16px; }
.active { background: #eff3fb; }
.active::after,
.running::after {
  content: "";
  position: absolute;
  bottom: 0;
  left: 50%;
  transform: translateX(-50%);
  height: 2px;
}
.active::after { width: 10px; background: #1a74d8; }
.running::after { width: 4px; background: #777; }
.tray {
  position: absolute;
  right: 11px;
  top: 7px;
  display: flex;
  align-items: center;
  gap: 10px;
  font-size: 10px;
  color: #333;
  font-family: "Noto Sans CJK SC", sans-serif;
}
</style>
